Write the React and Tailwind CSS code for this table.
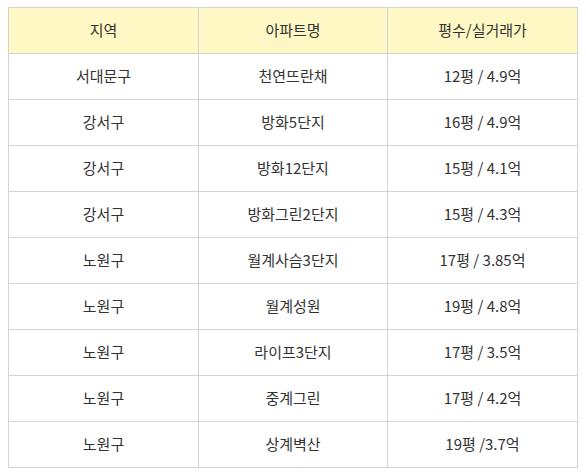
import React from "react";

const rows = [
  ["서대문구", "천연뜨란채", "12평 / 4.9억"],
  ["강서구", "방화5단지", "16평 / 4.9억"],
  ["강서구", "방화12단지", "15평 / 4.1억"],
  ["강서구", "방화그린2단지", "15평 / 4.3억"],
  ["노원구", "월계사슴3단지", "17평 / 3.85억"],
  ["노원구", "월계성원", "19평 / 4.8억"],
  ["노원구", "라이프3단지", "17평 / 3.5억"],
  ["노원구", "중계그린", "17평 / 4.2억"],
  ["노원구", "상계벽산", "19평 /3.7억"],
];

export default function App() {
  return (
    <div className="w-[586px] h-[476px] bg-white pl-[8px] pt-[7px]" style={{ fontFamily: '"Noto Sans CJK KR", "Noto Sans", sans-serif' }}>
      <table className="border-collapse table-fixed w-[569px] text-[15px] text-[#333]">
        <colgroup>
          <col className="w-[190px]" />
          <col className="w-[189px]" />
          <col className="w-[190px]" />
        </colgroup>
        <thead>
          <tr className="bg-[#fff8c4]">
            {["지역", "아파트명", "평수/실거래가"].map((h) => (
              <th key={h} className="border border-[#d3d3d3] h-[46px] p-0 font-normal text-center align-middle">
                {h}
              </th>
            ))}
          </tr>
        </thead>
        <tbody>
          {rows.map((r, i) => (
            <tr key={i}>
              {r.map((c, j) => (
                <td key={j} className="border border-[#d3d3d3] h-[46px] p-0 text-center align-middle">
                  {c}
                </td>
              ))}
            </tr>
          ))}
        </tbody>
      </table>
    </div>
  );
}
